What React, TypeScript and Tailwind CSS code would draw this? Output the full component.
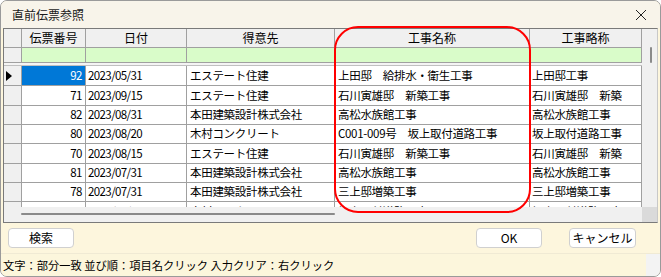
import React from "react";

const FONT = { fontFamily: '"Noto Sans CJK JP", "Noto Sans", sans-serif' };

const rows = [
  ["92", "2023/05/31", "エステート住建", "上田邸　給排水・衛生工事", "上田邸工事"],
  ["71", "2023/09/15", "エステート住建", "石川寅雄邸　新築工事", "石川寅雄邸　新築"],
  ["82", "2023/08/31", "本田建築設計株式会社", "高松水族館工事", "高松水族館工事"],
  ["80", "2023/08/20", "木村コンクリート", "C001-009号　坂上取付道路工事", "坂上取付道路工事"],
  ["70", "2023/08/15", "エステート住建", "石川寅雄邸　新築工事", "石川寅雄邸　新築"],
  ["81", "2023/07/31", "本田建築設計株式会社", "高松水族館工事", "高松水族館工事"],
  ["78", "2023/07/31", "本田建築設計株式会社", "三上邸増築工事", "三上邸増築工事"],
  ["77", "2023/07/20", "木村コンクリート", "坂上取付道路工事", "坂上取付道路工事"],
];
const heights = [20, 20, 19, 19, 20, 19, 19, 20];
const headers = ["伝票番号", "日付", "得意先", "工事名称", "工事略称"];

function Row({ r, i }: { r: string[]; i: number }) {
  const sel = i === 0;
  return (
    <div
      className="grid shrink-0 grid-cols-[18px_64px_101px_148px_195px_112px] text-[11.5px] tracking-[-0.3px] text-black"
      style={{ height: heights[i] }}
    >
      <div className="relative border-r border-b border-[#a0a0a0] bg-[#f0f0f0] flex items-center pl-[2px]">
        {sel && (
          <svg width="6" height="10" viewBox="0 0 6 10">
            <path d="M0 0 L6 5 L0 10 Z" fill="#000" />
          </svg>
        )}
      </div>
      <div
        className={
          "border-r border-b border-[#a0a0a0] flex items-center justify-end pr-[3px] tracking-[-0.5px] " +
          (sel ? "bg-[#0078d7] text-white" : "bg-white")
        }
      >
        {r[0]}
      </div>
      <div className="border-r border-b border-[#a0a0a0] bg-white flex items-center pl-[2px] whitespace-nowrap overflow-hidden tracking-[-0.6px]">
        {r[1]}
      </div>
      <div className="border-r border-b border-[#a0a0a0] bg-white flex items-center pl-[3px] whitespace-nowrap overflow-hidden">
        {r[2]}
      </div>
      <div className="border-r border-b border-[#a0a0a0] bg-white flex items-center pl-[3px] whitespace-nowrap overflow-hidden">
        {r[3]}
      </div>
      <div className="border-r border-b border-[#a0a0a0] bg-white flex items-center pl-[2px] whitespace-nowrap overflow-hidden">
        {r[4]}
      </div>
    </div>
  );
}

export default function App() {
  return (
    <div className="w-[661px] h-[277px] bg-white" style={FONT}>
      <div className="relative w-[661px] h-[277px] border border-[#9a9a9a] rounded-[7px] overflow-hidden bg-[#fdf6dd] flex flex-col">
        {/* title bar */}
        <div className="h-[27px] bg-[#f8f4ea] flex items-center justify-between pl-[11px] pr-[4px] shrink-0">
          <span className="text-[12px] text-[#1a1a1a]">直前伝票参照</span>
          <svg width="30" height="20" viewBox="0 0 30 20">
            <path d="M10 5 L20 15 M20 5 L10 15" stroke="#222" strokeWidth="1" fill="none" />
          </svg>
        </div>
        {/* grid */}
        <div className="mx-[2px] border border-[#7a7a7a] border-r-[#c8c8c8] bg-white flex flex-col shrink-0 h-[195px]">
          <div className="flex flex-1 min-h-0">
            <div className="w-[638px] overflow-hidden flex flex-col">
              <div className="grid shrink-0 grid-cols-[18px_64px_101px_148px_195px_112px] h-[19px] text-[12px] text-black">
                <div className="border-r border-b border-[#a0a0a0] bg-[#f0f0f0]" />
                {headers.map((h) => (
                  <div key={h} className="border-r border-b border-[#a0a0a0] bg-[#f0f0f0] flex items-center justify-center">
                    {h}
                  </div>
                ))}
              </div>
              <div className="grid shrink-0 grid-cols-[18px_64px_101px_148px_195px_112px] h-[15px]">
                <div className="border-r border-b border-[#a0a0a0] bg-[#f0f0f0]" />
                {headers.map((h) => (
                  <div key={h} className="border-r border-b border-[#a0a0a0] bg-[#d9fcc9]" />
                ))}
              </div>
              <div className="h-[3px] shrink-0 bg-[#f4f4f4] border-b border-[#c0c0c0]" />
              {rows.map((r, i) => (
                <Row key={i} r={r} i={i} />
              ))}
            </div>
            <div className="w-[15px] bg-[#f0f0f0] relative">
              <div className="absolute left-[8px] top-[18px] w-[2px] h-[16px] bg-[#8a8a8a] rounded-full" />
            </div>
          </div>
          <div className="h-[15px] flex shrink-0">
            <div className="w-[638px] bg-[#f0f0f0] relative">
              <div className="absolute left-[17px] top-[6px] w-[314px] h-[2px] bg-[#8a8a8a] rounded-full" />
            </div>
            <div className="w-[15px] bg-[#dadada]" />
          </div>
        </div>
        {/* buttons */}
        <div className="h-[30px] flex items-center px-[7px] shrink-0">
          <button className="w-[66px] h-[20px] bg-white border border-[#d0d0d0] rounded-[4px] text-[12px] text-black leading-none">
            検索
          </button>
          <div className="flex-1" />
          <button className="w-[66px] h-[20px] bg-white border border-[#d0d0d0] rounded-[4px] text-[12px] text-black leading-none">
            OK
          </button>
          <button className="ml-[27px] mr-[17px] w-[67px] h-[20px] bg-white border border-[#d0d0d0] rounded-[4px] text-[12px] text-black leading-none">
            キャンセル
          </button>
        </div>
        {/* status */}
        <div className="flex-1 border-t border-[#f0ead4] flex">
          <div className="flex-1 flex items-center pl-[2px] text-[11.25px] text-black bg-[#fcf6dc] whitespace-nowrap">
            文字：部分一致 並び順：項目名クリック 入力クリア：右クリック
          </div>
          <div className="w-[14px] bg-[#f3f3f3]" />
        </div>
        {/* annotation */}
        <div className="absolute left-[333px] top-[25px] w-[197px] h-[187px] border-2 border-[#ff0000] rounded-[24px] pointer-events-none" />
      </div>
    </div>
  );
}
